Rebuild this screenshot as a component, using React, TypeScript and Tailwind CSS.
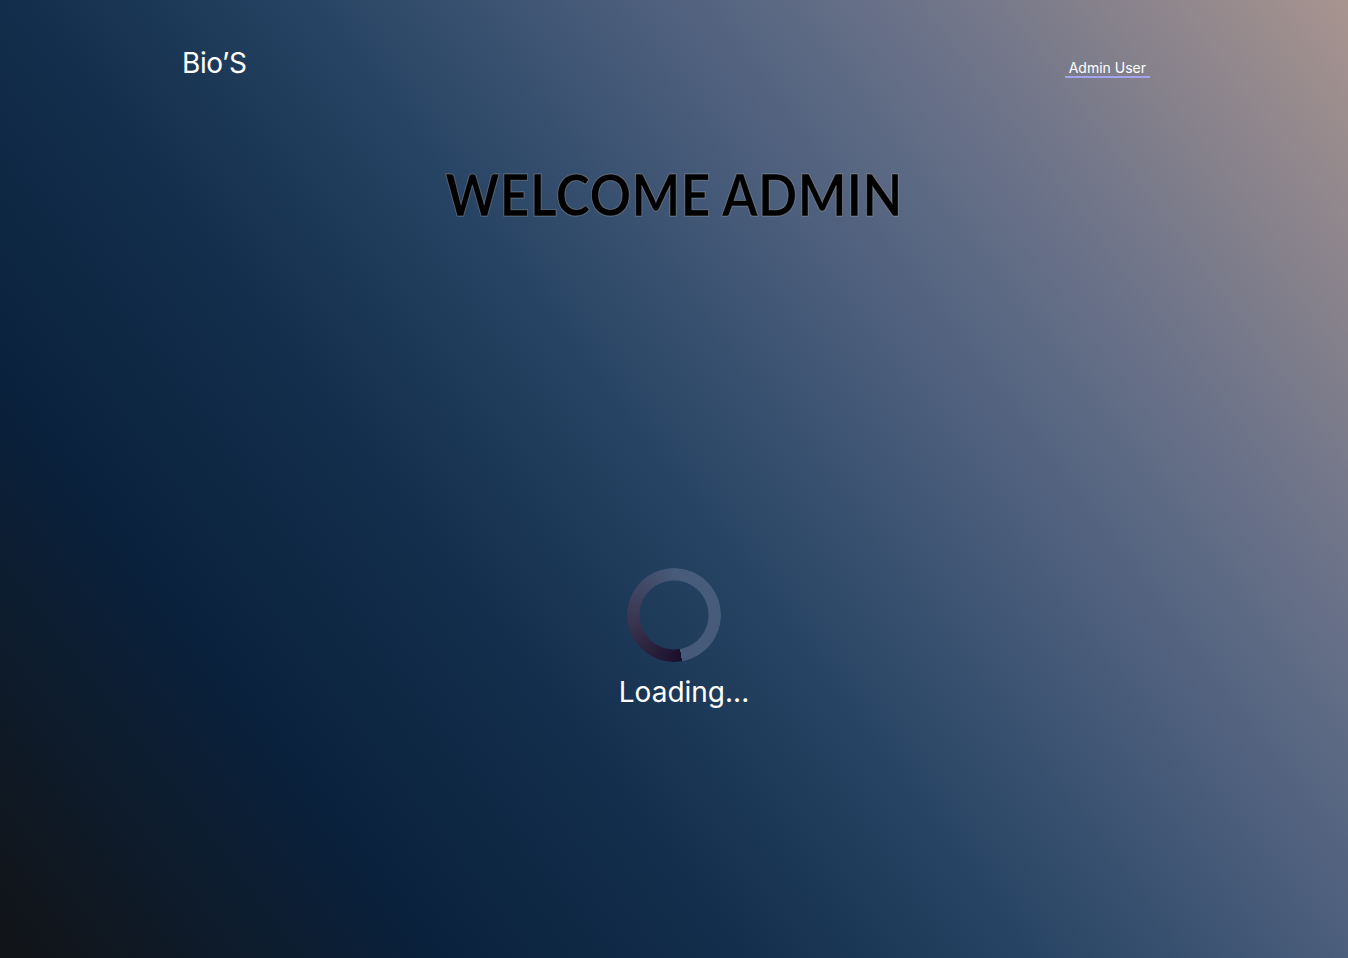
import React from 'react';

const App: React.FC = () => {
  return (
    <div className="min-h-screen w-full bg-[linear-gradient(53deg,#121417_0%,#0a213c_21%,#122d4b_35%,#284464_50%,#4b5e7c_65%,#6a7289_78%,#a8948f_100%)] font-['Inter',sans-serif] text-white flex flex-col">
      <header className="flex items-center justify-between pl-[182px] pr-[198px] pt-[45px]">
        <div className="text-[28px] leading-[36px] tracking-[-0.4px]">Bio’S</div>
        <a href="#" className="mt-[10px] px-[4px] text-[14px] leading-[17px] border-b-2 border-[#a3a3f0]">
          Admin User
        </a>
      </header>

      <div className="mt-[78px] flex justify-center">
        <h1 className="inline-block scale-x-[0.89] font-['Lato',sans-serif] font-bold text-[58px] leading-[70px] text-black tracking-[0.4px] [-webkit-text-stroke:1px_rgba(255,255,255,0.25)]">
          WELCOME ADMIN
        </h1>
      </div>

      <div className="flex flex-col items-center mt-[339px]">
        <div className="w-[94px] h-[94px] rounded-full bg-[conic-gradient(from_170deg,#1a0e2b_0deg,#3b3550_90deg,rgba(95,110,140,0.6)_190deg,rgba(95,110,140,0.6)_360deg)] [mask:radial-gradient(circle,transparent_34px,#000_35px)]" />
        <div className="mt-[12px] pl-5 text-[28px] leading-[36px]">Loading...</div>
      </div>
    </div>
  );
};

export default App;
